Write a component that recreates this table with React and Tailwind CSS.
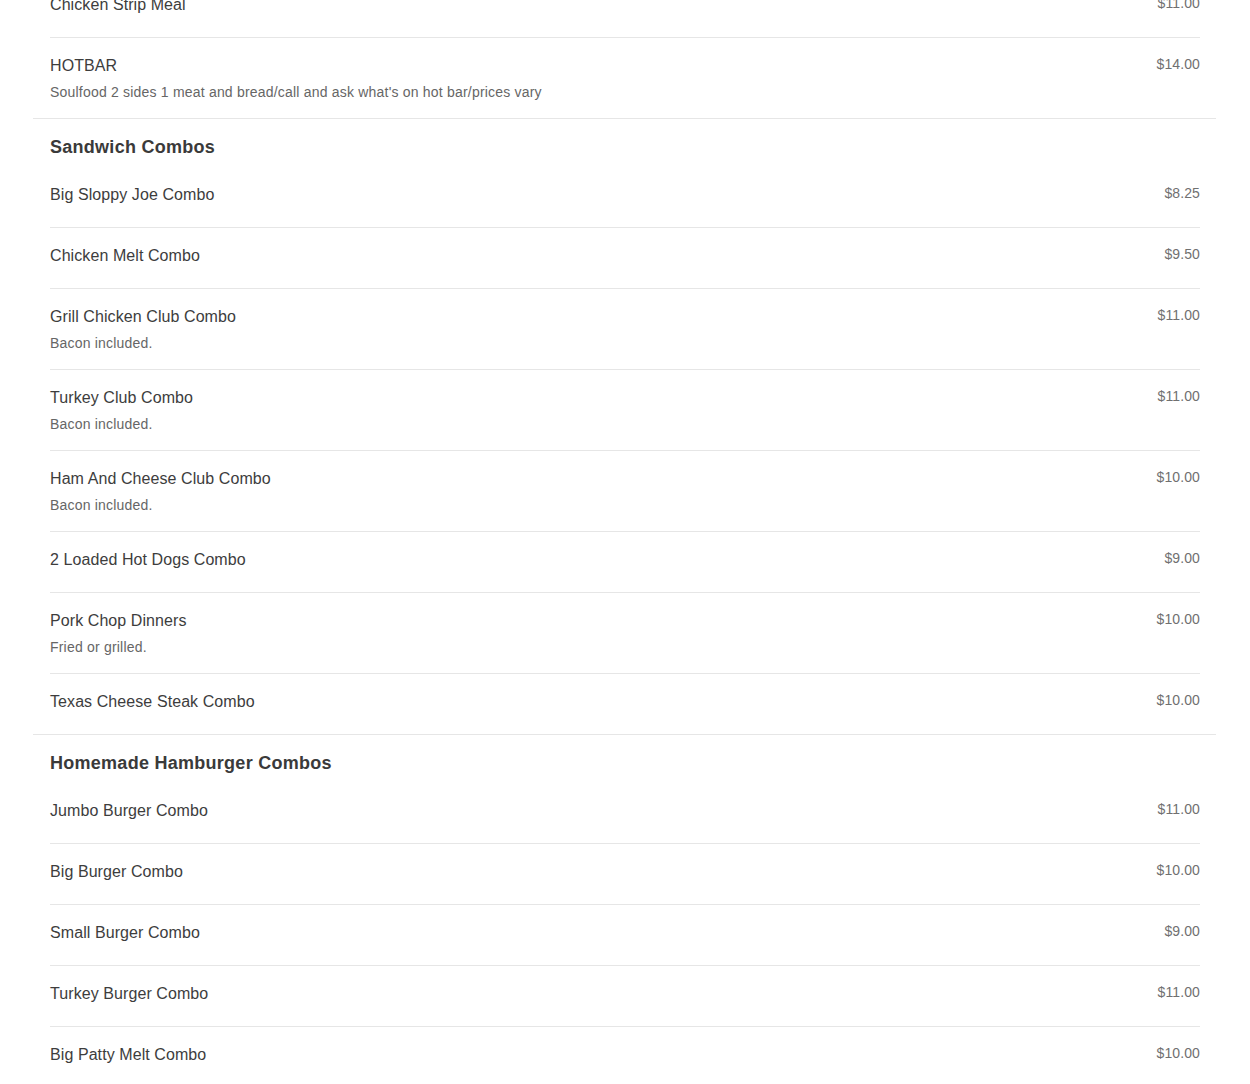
import React from 'react';

const sections = [
  {
    title: null,
    items: [
      { name: 'Chicken Strip Meal', price: '$11.00' },
      { name: 'HOTBAR', price: '$14.00', desc: "Soulfood 2 sides 1 meat and bread/call and ask what's on hot bar/prices vary" },
    ],
  },
  {
    title: 'Sandwich Combos',
    items: [
      { name: 'Big Sloppy Joe Combo', price: '$8.25' },
      { name: 'Chicken Melt Combo', price: '$9.50' },
      { name: 'Grill Chicken Club Combo', price: '$11.00', desc: 'Bacon included.' },
      { name: 'Turkey Club Combo', price: '$11.00', desc: 'Bacon included.' },
      { name: 'Ham And Cheese Club Combo', price: '$10.00', desc: 'Bacon included.' },
      { name: '2 Loaded Hot Dogs Combo', price: '$9.00' },
      { name: 'Pork Chop Dinners', price: '$10.00', desc: 'Fried or grilled.' },
      { name: 'Texas Cheese Steak Combo', price: '$10.00' },
    ],
  },
  {
    title: 'Homemade Hamburger Combos',
    items: [
      { name: 'Jumbo Burger Combo', price: '$11.00' },
      { name: 'Big Burger Combo', price: '$10.00' },
      { name: 'Small Burger Combo', price: '$9.00' },
      { name: 'Turkey Burger Combo', price: '$11.00' },
      { name: 'Big Patty Melt Combo', price: '$10.00' },
      { name: 'Veggie Burger Combo', price: '$10.00' },
    ],
  },
];

const MenuItem = ({ item, last }) => (
  <div className={`flex justify-between pt-4 pb-4 ${last ? '' : 'border-b border-[#e6e6e6]'}`}>
    <div>
      <p className="text-[16px] leading-[22px] pt-px tracking-[0.08px] text-[#3d3d3d] mb-[5px]">{item.name}</p>
      {item.desc && <p className="text-[14px] leading-[20px] tracking-[0.2px] text-[#666]">{item.desc}</p>}
    </div>
    <p className="text-[14px] leading-[20px] tracking-[0.1px] text-[#707070] whitespace-nowrap">{item.price}</p>
  </div>
);

export default function App() {
  return (
    <div className="bg-white h-[1084px] overflow-hidden font-['Liberation_Sans',Arial,sans-serif]">
      <div className="ml-[33px] mr-[34px] -mt-[23px]">
        {sections.map((s, i) => (
          <section key={i} className={`pl-[17px] pr-[16px] ${i > 0 ? 'border-t border-[#e6e6e6] pt-[15px]' : ''}`}>
            {s.title && (
              <h2 className="text-[18px] leading-[26px] font-bold tracking-[0.27px] text-[#3a3a3a] mb-[7px]">{s.title}</h2>
            )}
            {s.items.map((it, j) => (
              <MenuItem key={j} item={it} last={j === s.items.length - 1} />
            ))}
          </section>
        ))}
      </div>
    </div>
  );
}
